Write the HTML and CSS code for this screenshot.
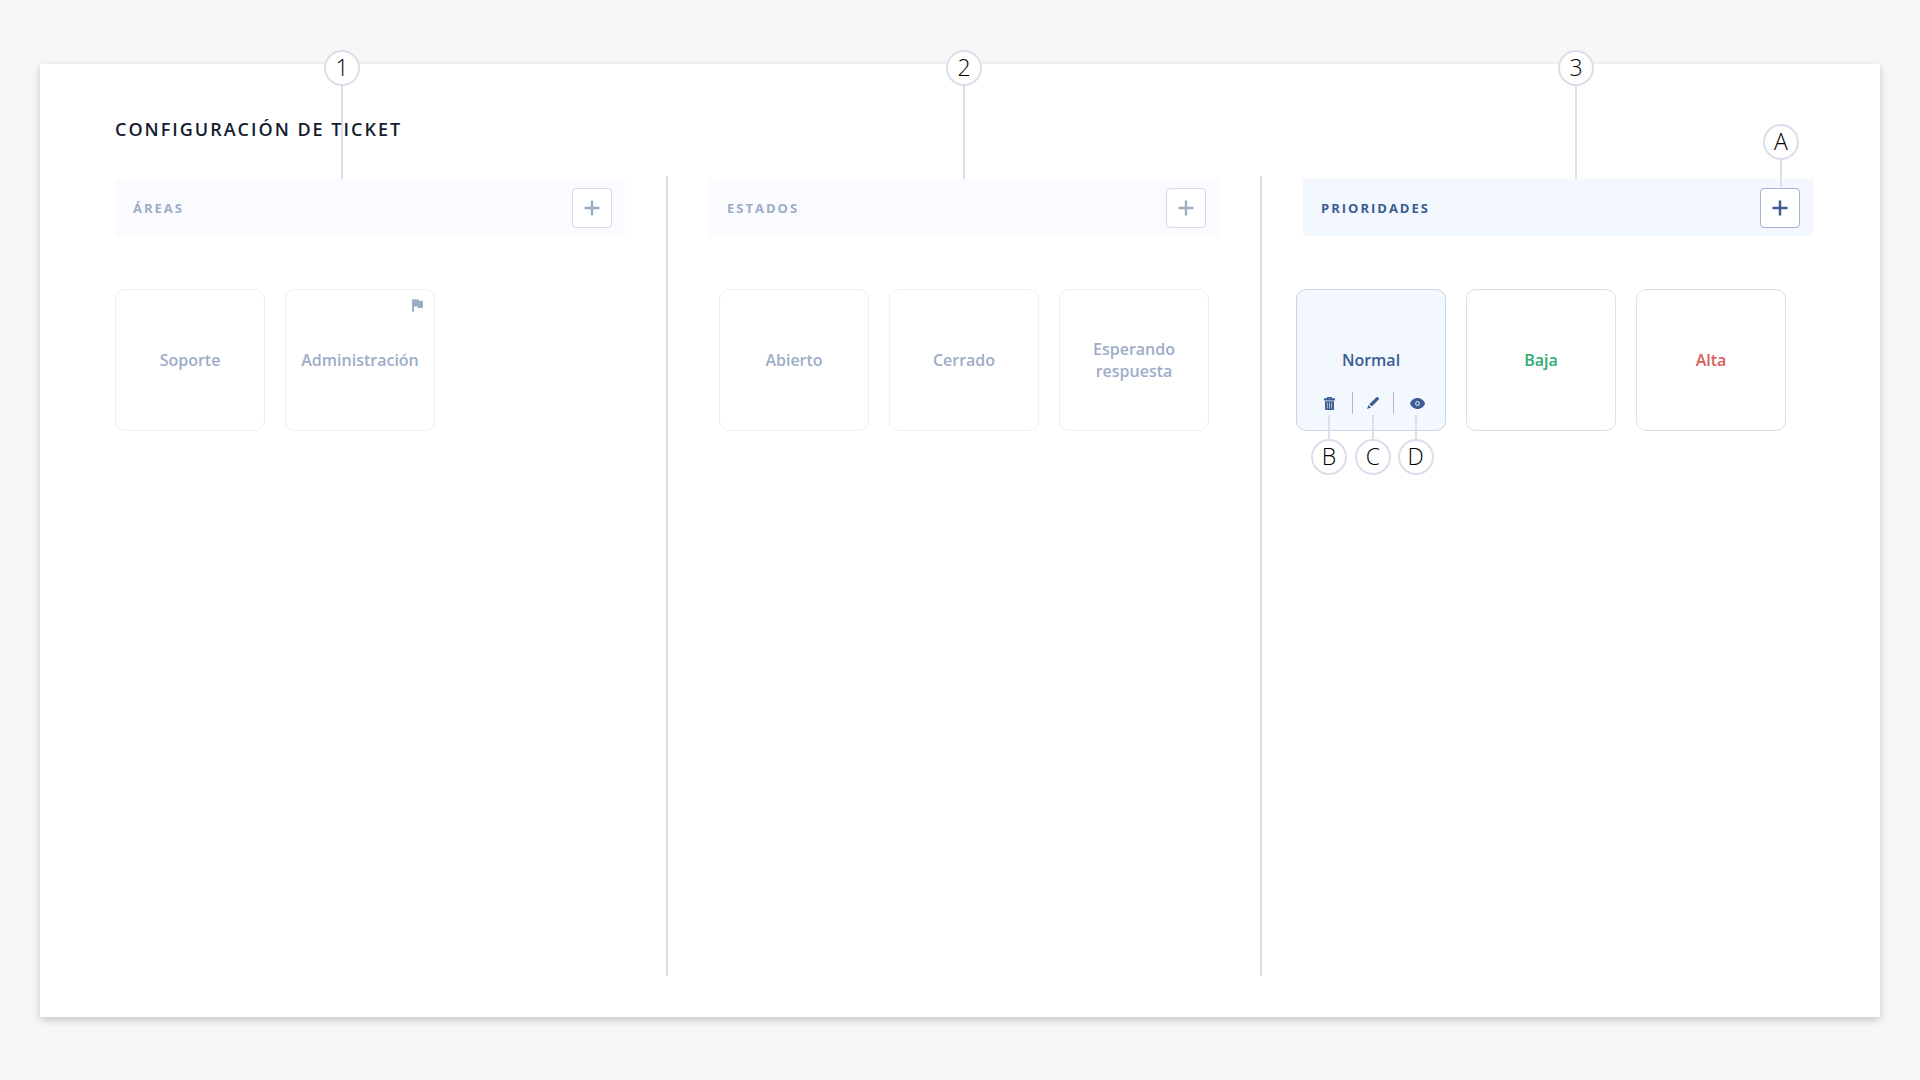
FILE: index.html
```
<!DOCTYPE html>
<html lang="es">
<head>
  <meta charset="UTF-8" />
  <meta name="viewport" content="width=device-width, initial-scale=1.0"/>
  <title>Configuración de ticket</title>
  <link rel="stylesheet" href="styles.css">
</head>
<body>
  <main class="panel">
    <h1>Configuración de ticket</h1>

    <div class="columns">
      <!-- Áreas -->
      <section class="column disabled">
        <div class="column-head">
          <h2>Áreas</h2>
          <button class="add-btn" type="button" aria-label="Agregar área">
            <svg width="16" height="16" viewBox="0 0 16 16"><path d="M8 0.5v15M0.5 8h15"/></svg>
          </button>
        </div>
        <span class="callout callout-1">1</span>
        <div class="cards">
          <div class="card"><p>Soporte</p></div>
          <div class="card">
            <svg class="flag" width="11" height="13" viewBox="5 4 15 17"><path d="M14.4 6L14 4H5v17h2.6v-7h5l.4 2h7V6z"/></svg>
            <p>Administración</p>
          </div>
        </div>
      </section>

      <div class="divider"></div>

      <!-- Estados -->
      <section class="column disabled">
        <div class="column-head">
          <h2>Estados</h2>
          <button class="add-btn" type="button" aria-label="Agregar estado">
            <svg width="16" height="16" viewBox="0 0 16 16"><path d="M8 0.5v15M0.5 8h15"/></svg>
          </button>
        </div>
        <span class="callout callout-2">2</span>
        <div class="cards cards-states">
          <div class="card"><p>Abierto</p></div>
          <div class="card"><p>Cerrado</p></div>
          <div class="card"><p>Esperando respuesta</p></div>
        </div>
      </section>

      <div class="divider"></div>

      <!-- Prioridades -->
      <section class="column">
        <div class="column-head">
          <h2>Prioridades</h2>
          <div class="add-wrap">
            <button class="add-btn" type="button" aria-label="Agregar prioridad">
              <svg width="16" height="16" viewBox="0 0 16 16"><path d="M8 0.5v15M0.5 8h15"/></svg>
            </button>
            <span class="callout callout-a">A</span>
          </div>
        </div>
        <span class="callout callout-3">3</span>
        <div class="cards cards-priorities">
          <div class="card selected">
            <p>Normal</p>
            <div class="actions">
              <div class="action">
                <button type="button" aria-label="Eliminar">
                  <svg width="11" height="13" viewBox="0 0 11 13">
                    <path fill-rule="evenodd" d="M3 1.2V.4A.4.4 0 0 1 3.400 0h4.200a.4.4 0 0 1 .4.4v.8h3v2.400H0V1.200zM4.200 1.300h2.600V.9H4.200z"/>
                    <path fill-rule="evenodd" d="M1 4.200h9V12a1 1 0 0 1-1 1H2a1 1 0 0 1-1-1zM2.900 5.500v6h.6v-6zM5.200 5.500v6h.6v-6zM7.500 5.500v6h.6v-6z"/>
                  </svg>
                </button>
                <span class="callout callout-below">B</span>
              </div>
              <div class="action">
                <button type="button" aria-label="Editar">
                  <svg width="12" height="12" viewBox="0 0 12 12">
                    <path d="M9.200.5a1.400 1.400 0 0 1 2 0l.3.3a1.400 1.400 0 0 1 0 2L4.800 9.500 2.400 7.200zM1.500 8l2.500 2.500L0 12z"/>
                  </svg>
                </button>
                <span class="callout callout-below">C</span>
              </div>
              <div class="action">
                <button type="button" aria-label="Ver">
                  <svg width="15" height="11" viewBox="0 0 15 11">
                    <path d="M7.500 0C4 0 1.200 2.300 0 5.500 1.200 8.700 4 11 7.500 11S13.800 8.700 15 5.500C13.800 2.300 11 0 7.500 0z"/>
                    <circle class="pupil" cx="7.500" cy="5.500" r="1.900"/>
                  </svg>
                </button>
                <span class="callout callout-below">D</span>
              </div>
            </div>
          </div>
          <div class="card low"><p>Baja</p></div>
          <div class="card high"><p>Alta</p></div>
        </div>
      </section>
    </div>
  </main>
</body>
</html>
```
FILE: styles.css
```
:root {
  --blue: #3b5d94;
  --blue-light: #f3f7fe;
  --line: #d9dfeb;
  --green: #2faa74;
  --red: #d95c5c;
}
* {
  box-sizing: border-box;
}
body {
  margin: 0;
  padding: 64px 40px 63px;
  background-color: #f7f7f7;
  font-family: "Open Sans", sans-serif;
  color: var(--blue);
}
.panel {
  display: flex;
  flex-direction: column;
  min-height: calc(100vh - 127px);
  padding: 53px 67px 41px 75px;
  background: #fff;
  box-shadow: 0 3px 8px rgba(0, 0, 0, 0.2);
}
h1 {
  position: relative;
  z-index: 1;
  margin: 0 0 35px;
  font-size: 18px;
  line-height: 24px;
  font-weight: 600;
  letter-spacing: 2px;
  text-transform: uppercase;
  color: #141c30;
}
/* Columnas */
.columns {
  flex: 1;
  display: grid;
  grid-template-columns: 1fr 2px 1fr 2px 1fr;
  column-gap: 41px;
}
.divider {
  background: var(--line);
}
.column {
  position: relative;
  padding-top: 3px;
}
.column-head {
  display: flex;
  align-items: center;
  justify-content: space-between;
  height: 57px;
  padding: 0 13px 0 18px;
  margin-bottom: 53px;
  background: var(--blue-light);
}
h2 {
  margin: 0;
  font-size: 13px;
  line-height: 20px;
  font-weight: 700;
  letter-spacing: 2px;
  text-transform: uppercase;
}
.add-wrap {
  position: relative;
}
.add-btn {
  display: flex;
  align-items: center;
  justify-content: center;
  width: 40px;
  height: 40px;
  padding: 0;
  background: #fff;
  border: 1px solid #a9b5cc;
  border-radius: 4px;
  cursor: pointer;
}
.add-btn path {
  fill: none;
  stroke: var(--blue);
  stroke-width: 2.4;
}
/* Tarjetas */
.cards {
  display: flex;
  gap: 20px;
}
.cards-states {
  margin-left: 10px;
}
.cards-priorities {
  margin-left: -7px;
}
.card {
  position: relative;
  display: grid;
  grid-template-rows: 1fr auto 1fr;
  width: 150px;
  height: 142px;
  border: 1px solid var(--line);
  border-radius: 10px;
}
.card p {
  grid-row: 2;
  margin: 0;
  padding: 0 12px;
  font-size: 16px;
  line-height: 22px;
  font-weight: 600;
  text-align: center;
}
.card.selected {
  background: var(--blue-light);
  border-color: #cbd4e4;
}
.card.low {
  color: var(--green);
}
.card.high {
  color: var(--red);
}
.flag {
  position: absolute;
  top: 9px;
  right: 11px;
  fill: #9dadc8;
}
.actions {
  grid-row: 3;
  align-self: end;
  display: grid;
  grid-template-columns: 46px 41px 44px;
  padding: 0 0 16px 9px;
}
.action {
  position: relative;
}
.action + .action {
  border-left: 1px solid #a9bad6;
}
.action button {
  display: flex;
  align-items: center;
  justify-content: center;
  width: 100%;
  height: 22px;
  padding: 0;
  background: none;
  border: 0;
  cursor: pointer;
}
.action:last-child button {
  width: 47px;
}
.action svg {
  fill: var(--blue);
}
.action .pupil {
  stroke: var(--blue-light);
}
/* Columnas inactivas */
.disabled {
  color: #9dadc8;
}
.disabled .column-head {
  background: #f9fbff;
}
.disabled .add-btn {
  border-color: #d4dbe8;
}
.disabled .add-btn path {
  stroke: #9dadc8;
}
.disabled .card {
  border-color: #ebeef5;
}
/* Llamadas numeradas */
.callout {
  position: absolute;
  left: 50%;
  width: 36px;
  height: 36px;
  margin-left: -18px;
  border: 2px solid var(--line);
  border-radius: 50%;
  background: #fff;
  color: #000;
  font-size: 23px;
  line-height: 31px;
  font-weight: 350;
  text-align: center;
}
.callout::after {
  content: "";
  position: absolute;
  top: 100%;
  left: 50%;
  width: 2px;
  height: 95px;
  margin-left: -1px;
  background: var(--line);
}
.callout-1,
.callout-2,
.callout-3 {
  top: -126px;
}
.callout-1 {
  margin-left: -46px;
}
.callout-3 {
  margin-left: 0;
}
.callout-a {
  top: -64px;
  margin-left: -17px;
}
.callout-a::after {
  height: 29px;
}
.callout-below {
  top: 47px;
}
.callout-below::after {
  top: auto;
  bottom: 100%;
  height: 26px;
}
```
